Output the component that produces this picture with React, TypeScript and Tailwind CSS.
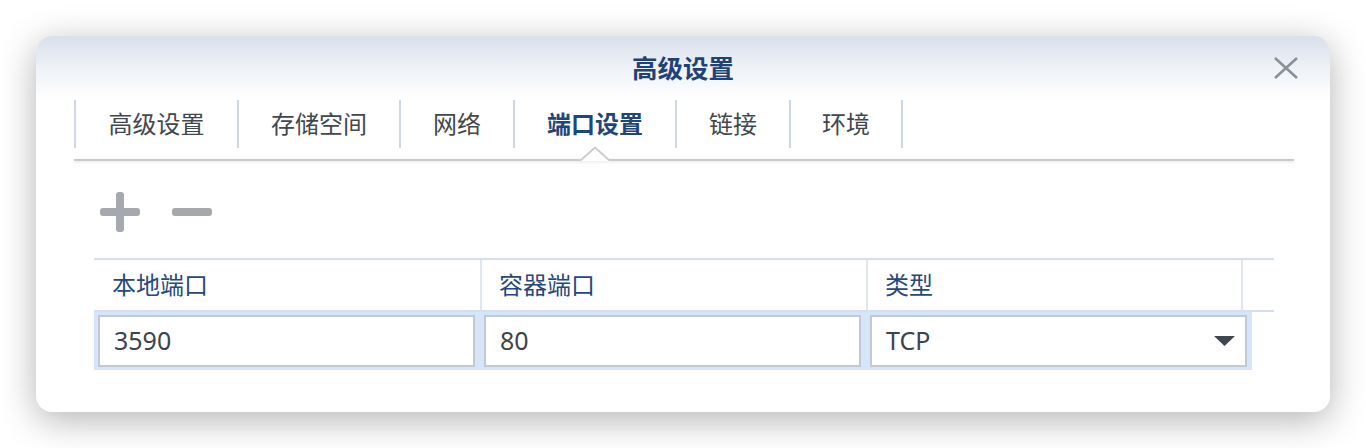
import React from "react";

const tabs = [
  { label: "高级设置", w: "w-[163px]" },
  { label: "存储空间", w: "w-[162px]" },
  { label: "网络", w: "w-[114px]" },
  { label: "端口设置", w: "w-[162px]", active: true },
  { label: "链接", w: "w-[114px]" },
  { label: "环境", w: "w-[114px]" },
];

export default function App() {
  return (
    <div
      className="w-[1366px] h-[448px] bg-white pt-[36px] pl-[36px]"
      style={{ fontFamily: '"Noto Sans", "Noto Sans CJK SC", sans-serif' }}
    >
      <div className="w-[1294px] h-[376px] rounded-[16px] bg-white shadow-[0_8px_36px_rgba(0,0,0,0.3)] flex flex-col">
        {/* Header */}
        <div className="h-[64px] rounded-t-[16px] bg-linear-to-b from-[#d8e0eb] via-[#eef2f7] to-white grid grid-cols-[1fr_auto_1fr] items-center">
          <div />
          <div className="text-[25.5px] leading-none font-bold text-[#1f4376] pt-[1px]">高级设置</div>
          <div className="flex justify-end pr-[32px]">
            <svg width="24" height="22" viewBox="0 0 24 22">
              <path d="M1 1 L23 21 M23 1 L1 21" stroke="#8b9097" strokeWidth="2.6" strokeLinecap="butt" />
            </svg>
          </div>
        </div>

        {/* Tabs */}
        <div className="pl-[38px] pr-[36px]">
          <div className="flex h-[48px]">
            {tabs.map((t, i) => (
              <div
                key={t.label}
                className={`${t.w} relative border-l-2 border-[#cfd9e6] flex items-center justify-center text-[24px] leading-none ${
                  i === tabs.length - 1 ? "border-r-2" : ""
                } ${t.active ? "font-bold text-[#1f4678]" : "text-[#41474e]"}`}
              >
                {t.label}
                {t.active && (
                  <svg
                    className="absolute top-[46px] left-1/2 -translate-x-1/2"
                    width="28"
                    height="15"
                    viewBox="0 0 28 15"
                  >
                    <polygon points="0,15 14,2 28,15" fill="#ffffff" />
                    <path d="M0 14 L14 1.5 L28 14" stroke="#cdcdcd" strokeWidth="2" fill="none" />
                  </svg>
                )}
              </div>
            ))}
          </div>
          <div className="mt-[11px] h-[2px] bg-[#cbcbcb] shadow-[0_1px_3px_rgba(0,0,0,0.12)]" />
        </div>

        {/* Content */}
        <div className="pl-[58px] pr-[56px]">
          {/* Toolbar */}
          <div className="mt-[31px] flex items-center gap-[32px] pl-[6px] h-[40px]">
            <div className="relative w-[40px] h-[40px] flex items-center justify-center">
              <div className="w-[40px] h-[8px] rounded-[3px] bg-[#a5a8ac]" />
              <div className="absolute w-[8px] h-[40px] rounded-[3px] bg-[#a5a8ac]" />
            </div>
            <div className="w-[40px] h-[8px] rounded-[3px] bg-[#a5a8ac]" />
          </div>

          {/* Table */}
          <div className="mt-[26px] w-[1180px]">
            <div className="border-t-2 border-b-2 border-[#d5dfeb] h-[54px] flex text-[24px] text-[#26497c]">
              <div className="w-[388px] border-r-2 border-[#dfe6ef] flex items-center pl-[18px]">本地端口</div>
              <div className="w-[386px] border-r-2 border-[#dfe6ef] flex items-center pl-[17px]">容器端口</div>
              <div className="w-[375px] border-r-2 border-[#dfe6ef] flex items-center pl-[17px]">类型</div>
              <div className="flex-1" />
            </div>
            <div className="w-[1158px] h-[58px] bg-[#d6e5f8] flex gap-[9px] pl-[4px] pr-[5px] py-[3px] text-[25px] text-[#3b434c]">
              <div className="w-[377px] border-2 border-[#c1cad4] bg-white flex items-center pl-[14px]">3590</div>
              <div className="w-[377px] border-2 border-[#c1cad4] bg-white flex items-center pl-[14px]">80</div>
              <div className="w-[377px] border-2 border-[#c1cad4] bg-white flex items-center justify-between pl-[14px] pr-[10px]">
                <span>TCP</span>
                <svg width="21" height="10" viewBox="0 0 21 10">
                  <polygon points="0,0 21,0 10.5,10" fill="#3e464f" />
                </svg>
              </div>
            </div>
          </div>
        </div>
      </div>
    </div>
  );
}
